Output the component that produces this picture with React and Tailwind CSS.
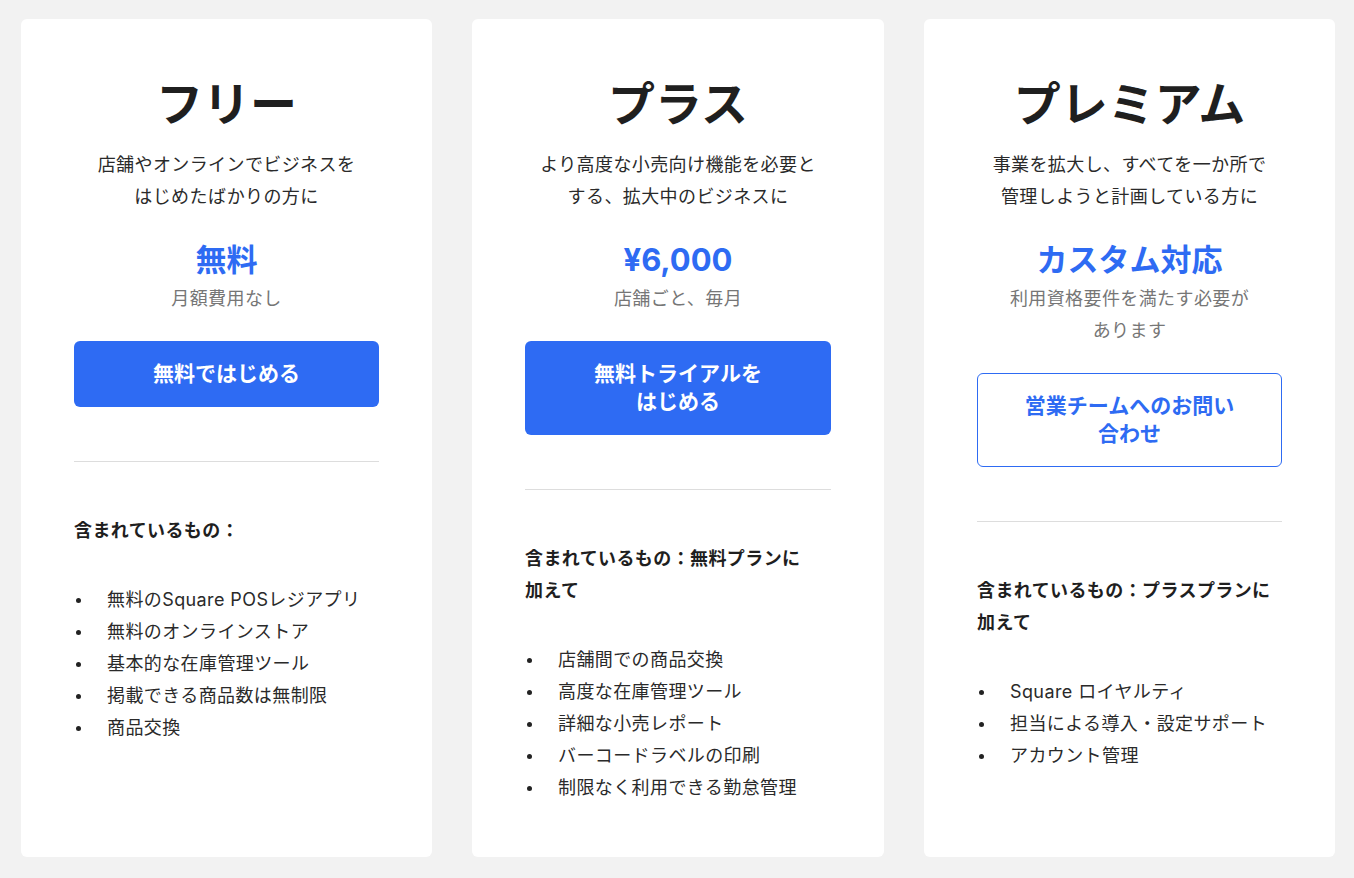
const plans = [
  {
    name: 'フリー',
    desc: ['店舗やオンラインでビジネスを', 'はじめたばかりの方に'],
    price: '無料',
    note: ['月額費用なし'],
    cta: ['無料ではじめる'],
    primary: true,
    heading: ['含まれているもの：'],
    items: [
      '無料のSquare POSレジアプリ',
      '無料のオンラインストア',
      '基本的な在庫管理ツール',
      '掲載できる商品数は無制限',
      '商品交換',
    ],
  },
  {
    name: 'プラス',
    desc: ['より高度な小売向け機能を必要と', 'する、拡大中のビジネスに'],
    price: '¥6,000',
    note: ['店舗ごと、毎月'],
    cta: ['無料トライアルを', 'はじめる'],
    primary: true,
    heading: ['含まれているもの：無料プランに', '加えて'],
    items: [
      '店舗間での商品交換',
      '高度な在庫管理ツール',
      '詳細な小売レポート',
      'バーコードラベルの印刷',
      '制限なく利用できる勤怠管理',
    ],
  },
  {
    name: 'プレミアム',
    desc: ['事業を拡大し、すべてを一か所で', '管理しようと計画している方に'],
    price: 'カスタム対応',
    note: ['利用資格要件を満たす必要が', 'あります'],
    cta: ['営業チームへのお問い', '合わせ'],
    primary: false,
    heading: ['含まれているもの：プラスプランに', '加えて'],
    items: ['Square ロイヤルティ', '担当による導入・設定サポート', 'アカウント管理'],
  },
];

function Lines({ lines }) {
  return lines.map((l, i) => (
    <span key={i}>
      {l}
      {i < lines.length - 1 && <br />}
    </span>
  ));
}

function PlanCard({ plan }) {
  return (
    <div className="bg-white rounded-[6px] px-[53px] pt-[56px] pb-10 flex flex-col">
      <h2 className="text-center text-[47px] leading-[58px] font-bold text-[#1f1f1f]">{plan.name}</h2>
      <p className="mt-4 text-center text-[18px] tracking-[0.4px] leading-8 text-[#2a2a2a]">
        <Lines lines={plan.desc} />
      </p>
      <div className="mt-[27px] text-center text-[31px] leading-10 font-bold text-[#2e6bf3]">{plan.price}</div>
      <p className="mt-[3px] text-center text-[18px] tracking-[0.4px] leading-8 text-[#767676]">
        <Lines lines={plan.note} />
      </p>
      <button
        className={
          plan.primary
            ? 'mt-[26px] w-full rounded-[6px] bg-[#2e6bf3] py-[19px] text-[21px] leading-7 font-bold text-white'
            : 'mt-[26px] w-full rounded-[6px] border border-[#2e6bf3] bg-white py-[18px] text-[21px] leading-7 font-bold text-[#2e6bf3]'
        }
      >
        <Lines lines={plan.cta} />
      </button>
      <div className="mt-[54px] h-px bg-[#dddddd]" />
      <h3 className="mt-[53px] text-[18px] tracking-[0.4px] leading-8 font-bold text-[#1f1f1f]">
        <Lines lines={plan.heading} />
      </h3>
      <ul className="mt-[37px]">
        {plan.items.map((it) => (
          <li key={it} className="flex items-center text-[18px] tracking-[0.4px] leading-8 text-[#2a2a2a]">
            <span className="w-[33px] shrink-0 pl-[2px]">
              <span className="block h-[5px] w-[5px] rounded-full bg-[#222222]" />
            </span>
            <span>{it}</span>
          </li>
        ))}
      </ul>
    </div>
  );
}

export default function App() {
  return (
    <div
      className="min-h-screen bg-[#f2f2f2] pl-[21px] pt-[19px] pb-[21px]"
      style={{ fontFamily: 'Inter, "Noto Sans CJK JP", sans-serif' }}
    >
      <div className="grid grid-cols-[411px_412px_411px] gap-10 h-[838px]">
        {plans.map((p) => (
          <PlanCard key={p.name} plan={p} />
        ))}
      </div>
    </div>
  );
}
